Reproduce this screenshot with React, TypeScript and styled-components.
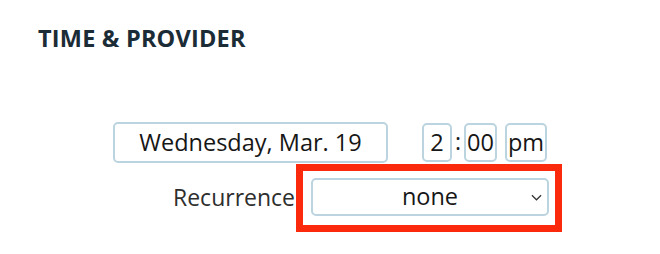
import styled, { createGlobalStyle } from 'styled-components'

const GlobalStyle = createGlobalStyle`
    html, body {
        margin: 0;
        background: #fff;
        font-family: 'Open Sans', 'Liberation Sans', sans-serif;
    }
`

export default function App() {
    return (
        <Page>
            <GlobalStyle />
            <Title>TIME &amp; PROVIDER</Title>
            <DateRow>
                <DateBox>Wednesday, Mar. 19</DateBox>
                <TimeGroup>
                    <TimeBox>2</TimeBox>
                    <Colon>:</Colon>
                    <TimeBox>00</TimeBox>
                    <TimeBox>pm</TimeBox>
                </TimeGroup>
            </DateRow>
            <RecurrenceRow>
                <Label>Recurrence</Label>
                <Highlight>
                    <Select>
                        <span>none</span>
                        <Chevron viewBox="0 0 12 7">
                            <path d="M1 1 L6 6 L11 1" />
                        </Chevron>
                    </Select>
                </Highlight>
            </RecurrenceRow>
        </Page>
    )
}

const Page = styled.div`
    width: 660px;
    height: 254px;
    box-sizing: border-box;
    padding: 23px 0 0 38px;
    display: flex;
    flex-direction: column;
`

const Title = styled.h2`
    margin: 0;
    font-size: 23.5px;
    font-weight: 700;
    color: #1b2c37;
    letter-spacing: 0.2px;
    line-height: 30px;
`

const DateRow = styled.div`
    display: flex;
    align-items: center;
    margin-top: 69px;
    padding-left: 75px;
`

const box = `
    box-sizing: border-box;
    border: 2px solid #bcd4df;
    border-radius: 5px;
    background: #fff;
    color: #161616;
    display: flex;
    align-items: center;
    justify-content: center;
    font-size: 23.5px;
`

const DateBox = styled.div`
    ${box}
    width: 275px;
    height: 41px;
    padding-bottom: 2px;
`

const TimeGroup = styled.div`
    display: flex;
    align-items: center;
    margin-left: 34px;
`

const TimeBox = styled.div`
    ${box}
    height: 39px;
    padding: 0 1px 2px;
    min-width: 30px;
    & + & {
        margin-left: 8px;
    }
`

const Colon = styled.span`
    font-size: 23px;
    color: #1c1c1c;
    margin: 0 3px 3px 3px;
`

const RecurrenceRow = styled.div`
    display: flex;
    align-items: center;
    margin-top: 1px;
    padding-left: 135px;
`

const Label = styled.span`
    font-size: 23px;
    color: #2e2e2e;
    width: 123px;
    padding-bottom: 2px;
    white-space: nowrap;
`

const Highlight = styled.div`
    border: 7px solid #fb2a0c;
    padding: 7px 6px 9px 8px;
`

const Select = styled.div`
    ${box}
    position: relative;
    width: 238px;
    height: 38px;
    padding-bottom: 3px;
`

const Chevron = styled.svg`
    position: absolute;
    right: 5px;
    top: 14px;
    width: 11px;
    height: 7px;
    fill: none;
    stroke: #333;
    stroke-width: 1.3;
`
